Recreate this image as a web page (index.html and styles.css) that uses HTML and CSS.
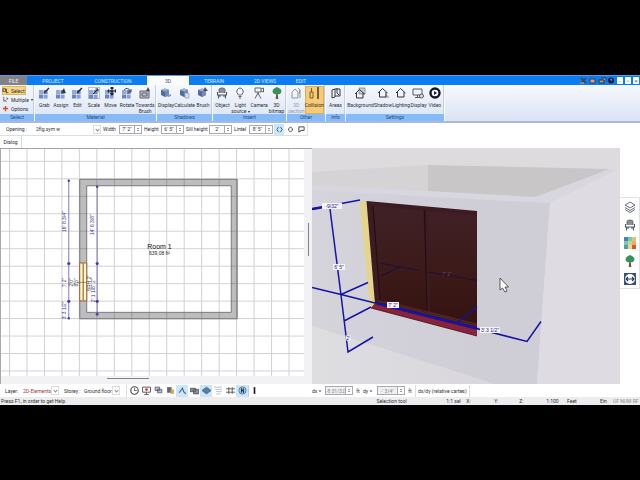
FILE: index.html
```html
<!DOCTYPE html>
<html lang="en">
<head>
<meta charset="utf-8">
<title>Room planner</title>
<link rel="stylesheet" href="styles.css">
</head>
<body>
<svg class="defs" aria-hidden="true">
  <symbol id="tiles" viewBox="0 0 12 12"><path fill="#93a9d8" d="M1 3h4v4H1z"/><path fill="#6686c8" d="M5.600 3h4v4h-4zM1 7.600h4v4H1z"/><path fill="#86a0d5" d="M5.600 7.600h4v4h-4z"/></symbol>
  <symbol id="house" viewBox="0 0 12 12"><path d="M1 6l4.500-4.500L10.500 6M2.500 5v5h6.500V5" fill="none" stroke="#30343c" stroke-width="1"/></symbol>
  <symbol id="chair" viewBox="0 0 12 12"><path d="M3 6V2.500Q3 1 6 1t3 1.500V6" fill="#8a8d94" stroke="#555961" stroke-width=".8"/><path d="M1.500 5v3h9V5M2.500 8v3.500M9.500 8v3.500M4 8v2M8 8v2" fill="none" stroke="#555961" stroke-width="1.100"/></symbol>
  <symbol id="tree" viewBox="0 0 12 12"><path d="M5.300 6h1.400l.6 6H4.700z" fill="#6b5a40"/><path d="M6 0l2 1 2 1.500.5 2.500L9 7 6 7.500 3 7 1.500 5 2 2.500 4 1z" fill="#36915a"/></symbol>
  <symbol id="cube" viewBox="0 0 12 12"><path d="M1 3l4-1.500L9 3v5L5 10 1 8z" fill="#526a9c"/><path d="M1 3l4-1.500L9 3 5 4.500z" fill="#9eb2dc"/><path d="M5 4.500L9 3v5l-4 2z" fill="#7389ba"/></symbol>
  <symbol id="monitor" viewBox="0 0 12 12"><path d="M1 2h9v6H1zM5.500 8v2M3 10.500h5" fill="#eef1f8" stroke="#454952" stroke-width=".9"/></symbol>
</svg>
<div class="app">
  <header>
    <nav class="tabs">
      <a href="#file" class="file">FILE</a><a href="#project">PROJECT</a><a href="#construction">CONSTRUCTION</a><a href="#3d" class="active">3D</a><a href="#terrain">TERRAIN</a><a href="#views">2D VIEWS</a><a href="#edit">EDIT</a>
      <div class="wintools">
        <svg viewBox="0 0 36 8" class="toolicons"><path d="M2 6l5-5M2 1l5 5" stroke="#4a4038" stroke-width="1.500"/><path d="M1 6h4" stroke="#f1a43b"/><path d="M11 2h5v4h-5z" fill="#e1a36b" stroke="#303c54"/><path d="M20 3h5v3h-5zM22 1h5v3" fill="#b09e77" stroke="#26364f"/><circle cx="32" cy="3.500" r="3" fill="#17213a"/><path d="M31 2.500q1-1 2 0l-1 1.500" fill="none" stroke="#a9bfe9" stroke-width=".7"/></svg>
        <button aria-label="Minimize">-</button><button aria-label="Restore">▫</button><button aria-label="Close">×</button>
      </div>
    </nav>
    <div class="ribbon">
      <section class="group g-select">
        <div class="stack">
          <button class="on"><svg viewBox="0 0 8 8"><path d="M1 2h3v3H1zM5 2v5l1.500-1 1 1" fill="none" stroke="#51451f"/></svg>Select</button>
          <button><svg viewBox="0 0 8 8"><path d="M2 1v5l2-1 1 2M5 2l2 1-2 1" fill="none" stroke="#333a48" stroke-width=".8"/></svg>Multiple <i class="caret"></i></button>
          <button><svg viewBox="0 0 8 8"><path d="M4 1v6M1 4h6" stroke="#dc4a20" stroke-width="1.600"/></svg>Options</button>
        </div>
        <h2>Select</h2>
      </section>
      <section class="group g-material">
        <div class="row">
          <button><svg viewBox="0 0 12 12"><use href="#tiles"/><path d="M6 6l5-5" stroke="#333" stroke-width="1.500"/></svg>Grab</button>
          <button><svg viewBox="0 0 12 12"><use href="#tiles"/><path d="M7 4l2-3 1 3 1 2H6z" fill="#333b48"/></svg>Assign</button>
          <button><svg viewBox="0 0 12 12"><use href="#tiles"/><path d="M6 6l5-5" stroke="#20262e" stroke-width="1.500"/></svg>Edit</button>
          <button><svg viewBox="0 0 12 12"><use href="#tiles"/><path d="M.5.500h11v11H.5z" fill="none" stroke="#456155" stroke-width=".7" stroke-dasharray="1 1"/><path d="M5 7l5-5M7.500 2H10v2.500" fill="none" stroke="#222"/></svg>Scale</button>
          <button><svg viewBox="0 0 12 12"><use href="#tiles"/><path d="M8 0v8M4 4h8M6.500 1.500L8 0l1.500 1.500M6.500 6.500L8 8l1.500-1.500M5 2.500L4 4l1 1.500M11 2.500L12 4l-1 1.500" fill="none" stroke="#222" stroke-width="1.200"/></svg>Move</button>
          <button><svg viewBox="0 0 12 12"><use href="#tiles"/><path d="M3 3q4-4 7 2M10 2v3H7" fill="none" stroke="#444b58"/></svg>Rotate</button>
          <button class="wide"><svg viewBox="0 0 12 12"><path d="M1 4h9v7H1zM3 6h5v3H3z" fill="#c3c6cf" stroke="#5d616a"/><path d="M7 4l2-4 2 4" fill="#444a55"/></svg>Towards<br>Brush</button>
        </div>
        <h2>Material</h2>
      </section>
      <section class="group g-shadows">
        <div class="row">
          <button><svg viewBox="0 0 12 12"><use href="#cube"/><path d="M7 9l4-2v2L8 10z" fill="#8391b1"/></svg>Display</button>
          <button><svg viewBox="0 0 12 12"><use href="#cube"/><path d="M6 6h4v5H6z" fill="#d7deed" stroke="#858fa8" stroke-width=".6"/></svg>Calculate</button>
          <button><svg viewBox="0 0 12 12"><use href="#cube"/><path d="M6 4l2-4 3 4z" fill="#4b5262"/></svg>Brush</button>
        </div>
        <h2>Shadows</h2>
      </section>
      <section class="group g-insert">
        <div class="row">
          <button><svg viewBox="0 0 12 12"><use href="#chair"/></svg>Object</button>
          <button><svg viewBox="0 0 12 12"><path d="M4.500 8Q2 5.500 3 3q3-4 6 0 1 2.500-1.500 5zM4.500 9.500h3M5 11h2" fill="none" stroke="#52565e" stroke-width=".9"/></svg>Light<br>source <i class="caret"></i></button>
          <button><svg viewBox="0 0 12 12"><path d="M2 1h6v4H2zM8 2l2.500-1v4L8 4M5 5v3M5 6l-3 5.500M5 6l3 5.500" fill="none" stroke="#63666d"/></svg>Camera</button>
          <button><svg viewBox="0 0 12 12"><use href="#tree"/></svg>3D<br>bitmap</button>
        </div>
        <h2>Insert</h2>
      </section>
      <section class="group g-other">
        <div class="row">
          <button disabled><svg viewBox="0 0 12 12"><path d="M2 11V5l3-3 3 3v6zM8 1l2 2-1 4M10 3v8" fill="none" stroke="#888d98" stroke-width=".9"/></svg>3D<br>section</button>
          <button class="on"><svg viewBox="0 0 12 12"><path d="M2 5h3v6H2zM3.500 1v4" fill="#f3c66e" stroke="#725226" stroke-width=".9"/><path d="M10 0v12" stroke="#30251a" stroke-width="1.300"/></svg>Collision</button>
        </div>
        <h2>Other</h2>
      </section>
      <section class="group g-info">
        <div class="row"><button><svg viewBox="0 0 12 12"><path d="M2 3l3-1v8l-3 1zM5 2h5v7H5M7 1v5l2 2" fill="none" stroke="#333944"/></svg>Areas</button></div>
        <h2>Info</h2>
      </section>
      <section class="group g-settings">
        <div class="row">
          <button><svg viewBox="0 0 12 12"><path d="M5 1h6v6H5z" fill="#c9ccce" stroke="#777b80" stroke-width=".7"/><use href="#house" y="1"/></svg>Background</button>
          <button><svg viewBox="0 0 12 12"><path d="M8 7l4 2v2H8z" fill="#b9bfcb"/><use href="#house"/></svg>Shadow</button>
          <button><svg viewBox="0 0 12 12"><use href="#house"/></svg>Lighting</button>
          <button><svg viewBox="0 0 12 12"><use href="#monitor"/><circle cx="9.500" cy="9" r="2" fill="#d9deea" stroke="#555a65"/></svg>Display</button>
          <button><svg viewBox="0 0 12 12"><circle cx="6" cy="6" r="5.700" fill="#10172b"/><circle cx="6" cy="6" r="3.300" fill="#f5f7ff"/><path d="M5 4l3 2-3 2z" fill="#10172b"/></svg>Video</button>
        </div>
        <h2>Settings</h2>
      </section>
    </div>
  </header>

  <form class="options">
    <label for="opening">Opening :</label>
    <span class="pick"><select id="opening"><option>2flg.sym w</option></select></span>
    <label for="w">Width</label><span class="spin"><input id="w" value="7' 2&quot;"><button type="button" aria-label="Step width"></button></span>
    <label for="h">Height</label><span class="spin"><input id="h" value="6' 5&quot;"><button type="button" aria-label="Step height"></button></span>
    <label for="s">Sill height</label><span class="spin"><input id="s" value="2'"><button type="button" aria-label="Step sill height"></button></span>
    <label for="l">Lintel</label><span class="spin"><input id="l" value="8' 5&quot;"><button type="button" aria-label="Step lintel"></button></span>
    <button type="button" class="tool on" aria-label="Flip"><svg viewBox="0 0 8 8"><path d="M3 1L1 4l2 3M5 1l2 3-2 3" fill="none" stroke="#265d86"/></svg></button>
    <button type="button" class="tool" aria-label="Swap"><svg viewBox="0 0 8 8"><path d="M2 3l2-2 2 2M2 5l2 2 2-2M2 3v2M6 3v2" fill="none" stroke="#333"/></svg></button>
    <button type="button" class="tool" aria-label="Anchor"><svg viewBox="0 0 8 8"><path d="M1 1h6v4H3M1 1v6M1 7l3-2" fill="none" stroke="#333"/></svg></button>
  </form>
  <div class="dialogrow"><button>Dialog</button></div>

  <main>
    <section class="plan">
      <svg viewBox="0 148 304 228" preserveAspectRatio="xMidYMid slice" role="img" aria-label="Floor plan">
        <defs><pattern id="grid" x="8" y="160" width="17.530" height="17.530" patternUnits="userSpaceOnUse"><path d="M.5 0v17.530M0 .5h17.530" stroke="#000" stroke-opacity=".18" stroke-width="1"/></pattern></defs>
        <path d="M0 148h304v228H0z" fill="#fff"/>
        <path d="M79 178.500h158v140h-158zM86 185v127h145v-127z" fill="#bdbdbf" fill-rule="evenodd"/>
        <path d="M0 148h304v228H0z" fill="url(#grid)"/>
        <path d="M79 178.500h158v140h-158zM86 185v127h145v-127z" fill="none" stroke="#6f6f70" stroke-width=".9"/>
        <path d="M79 262.500h7v38h-7z" fill="#fff8d5" stroke="#a85b36"/>
        <path d="M82.500 262.500v38" stroke="#a18e35" stroke-width="1.500"/>
        <path d="M76 282h10" stroke="#555" stroke-width=".6"/>
        <g stroke="#6459b0" stroke-width=".8"><path d="M68 179v140M96.500 185v129"/></g>
        <g fill="#483cab"><circle cx="68" cy="180" r="1.200"/><circle cx="68" cy="263" r="1.600"/><circle cx="68" cy="301" r="1.600"/><circle cx="68" cy="318" r="1.200"/><circle cx="96.500" cy="186" r="1.200"/><circle cx="96.500" cy="263" r="1.600"/><circle cx="96.500" cy="301" r="1.600"/><circle cx="96.500" cy="314" r="1.400"/></g>
        <g class="dim">
          <text transform="translate(65 221) rotate(-90)">16' 8 3/4"</text><text transform="translate(93 224) rotate(-90)">14' 6 3/8"</text>
          <text transform="translate(65 282) rotate(-90)">7' 2"</text><text transform="translate(65 310) rotate(-90)">3' 3 1/2"</text>
          <text transform="translate(94 290) rotate(-90)">2' 1 1/8" 2"</text>
        </g>
        <g class="dim dark"><text transform="translate(72 282) rotate(-90)">2'0"</text><text transform="translate(77 282) rotate(-90)">8'5"</text><text transform="translate(90 283) rotate(-90)">BRH 2'</text></g>
        <text class="room" x="159" y="248">Room 1</text><text class="area" x="159" y="254">639,08 ft²</text>
      </svg>
      <div class="vbar"><i></i></div>
      <div class="hbar"><i></i></div>
    </section>
    <section class="scene">
      <svg viewBox="312 148 308 236" preserveAspectRatio="xMidYMid slice" role="img" aria-label="3D view">
        <defs>
          <linearGradient id="front" x1="0" x2="1"><stop offset="0" stop-color="#d5d4db"/><stop offset=".7" stop-color="#cfced7"/><stop offset="1" stop-color="#cfced7"/></linearGradient>
          <linearGradient id="ground" x1="0" x2="1"><stop offset="0" stop-color="#dedde0"/><stop offset="1" stop-color="#d9d7dd"/></linearGradient>
          <linearGradient id="glass" x1="0" y1="0" x2="0" y2="1"><stop offset="0" stop-color="#402126"/><stop offset=".5" stop-color="#3c1b1a"/><stop offset="1" stop-color="#35130f"/></linearGradient>
        </defs>
        <path d="M312 148h308v236H312z" fill="#dddbde"/>
        <path d="M312 172l116-7v27l-116-6z" fill="#d5d3d4"/>
        <path d="M428 165l182 4-74 29-108-6z" fill="#c8c6c7"/>
        <path d="M312 185l116 6 107 6 75-28 8 1-68 33-238-12z" fill="#d8d6df"/>
        <path d="M312 190l178 10 60 3-13 181H312z" fill="url(#front)"/>
        <path d="M550 203l68-34h2v215h-83z" fill="#dedbe2"/>
        <path d="M312 326l171 54 10 4H312z" fill="url(#ground)"/>
        <path d="M359.500 201l7 .5 9 103-5.500 4z" fill="#e5d58c"/>
        <path d="M366.500 201l110.500 10v118l-102-25z" fill="#3c1c22"/>
        <path d="M373 206l50 5 3 101-46-11zM428 211l49 4v109l-47-12z" fill="url(#glass)"/>
        <path d="M373 206l7 94M424.500 210l2.500 102" fill="none" stroke="#260c12" stroke-width="1.200"/>
        <path d="M378 301l99 25M384 301l93 23" stroke="#6f3035" stroke-width=".6"/>
        <path d="M375 303l102 25v8l-106-28z" fill="#8b2338"/>
        <path d="M371 308l106 28" stroke="#32121b" stroke-width=".8"/>
        <path d="M380 263l39 7.500M381 276l19-9M428 272l49 8.500" fill="none" stroke="#1b1044" stroke-width="1.200"/>
        <text class="tag ghost" x="447" y="276">7' 2"</text>
        <g fill="none" stroke="#1414a5" stroke-width="1.500"><path d="M312 209l48-9M330 209l11 86 7 57 25-15M312 287.500l29 7 36 9 80 20 70 18 14-20M341 294.500l27-12M344 321l27-14M457 323l20-16"/><path d="M312 209l18-3M377 303.500l100 25" stroke-width="2.400"/></g>
        <g fill="#f4f3fb"><path d="M322 203h20v6h-20zM333 264h12v6h-12zM387 302h12v6h-12zM480 327h20v6h-20zM345.500 335.500h5v5h-5z"/></g>
        <text class="tag" x="332" y="208">-9/32"</text><text class="tag" x="339" y="269">6' 5"</text><text class="tag" x="393" y="307">7' 2"</text><text class="tag" x="490" y="332">3'.3 1/2"</text><text class="tag" x="348" y="340">2'</text>
        <path d="M500 278v12l2.500-2 2.500 4 2-1-2-4h3.500z" fill="#fff" stroke="#333" stroke-width=".8"/>
      </svg>
    </section>
    <aside>
      <div class="palette">
        <button aria-label="Layers"><svg viewBox="0 0 12 12"><path d="M1 4l5-3 5 3-5 3zM1 6.500l5 3 5-3M1 8.500l5 3 5-3" fill="none" stroke="#555c69" stroke-width=".9"/></svg></button>
        <button aria-label="Objects"><svg viewBox="0 0 12 12"><use href="#chair"/></svg></button>
        <button aria-label="Materials"><svg viewBox="0 0 12 12"><path fill="#3d87b8" d="M0 0h4v4H0z"/><path fill="#86c4b2" d="M4 0h4v4H4zM0 4h4v4H0z"/><path fill="#e5c36b" d="M8 0h4v4H8z"/><path fill="#c9d785" d="M4 4h4v4H4z"/><path fill="#f0ad61" d="M8 4h4v4H8z"/><path fill="#4aa0aa" d="M0 8h4v4H0z"/><path fill="#efd58d" d="M4 8h4v4H4z"/><path fill="#d4572f" d="M8 8h4v4H8z"/></svg></button>
        <button aria-label="Plants"><svg viewBox="0 0 12 12"><use href="#tree"/></svg></button>
        <button aria-label="Remote support"><svg viewBox="0 0 12 12"><path fill="#34517c" d="M0 0h12v12H0z"/><circle cx="6" cy="6" r="5" fill="#fff"/><path d="M2 6h8M4 4L2 6l2 2M8 4l2 2-2 2" fill="none" stroke="#27364f" stroke-width="1.100"/></svg></button>
      </div>
    </aside>
  </main>

  <form class="bottom">
    <div class="layers">
      <label for="layer">Layer:</label><span class="pick"><select id="layer" class="red"><option>2D-Elements</option></select></span>
      <label for="storey">Storey :</label><span class="pick"><select id="storey"><option>Ground floor</option></select></span>
      <div class="toggles">
        <button type="button" aria-label="Time"><svg viewBox="0 0 8 8"><circle cx="4" cy="4" r="3.300" fill="#fff" stroke="#444"/><path d="M4 2v2h2" fill="none" stroke="#444" stroke-width=".7"/></svg></button>
        <button type="button" aria-label="Screen"><svg viewBox="0 0 8 8"><path d="M.5 1h7v4.500h-7zM4 5.500V7M2 7.500h4" fill="none" stroke="#554b4e" stroke-width=".8"/><circle cx="4" cy="3.200" r="1.200" fill="#c33"/></svg></button>
        <button type="button" aria-label="Groups"><svg viewBox="0 0 8 8"><path d="M1 1h4v3H1zM3 3h4v3H3z" fill="#b9bdcb" stroke="#555b6b" stroke-width=".7"/></svg></button>
        <button type="button" aria-label="Colours"><svg viewBox="0 0 8 8"><path d="M1 1h4v5H1z" fill="#5b6584"/><path d="M4 3h3v4H4z" fill="#d3a548"/></svg></button>
        <button type="button" class="on" aria-label="Snap"><svg viewBox="0 0 8 8"><path d="M1 6l3-4 1 3 2 2" fill="none" stroke="#46648c"/></svg></button>
        <button type="button" aria-label="Walls"><svg viewBox="0 0 8 8"><path d="M0 2h5v3H0zM3 3h5v4H3z" fill="#8b8f9c" stroke="#434854" stroke-width=".6"/></svg></button>
        <button type="button" class="on" aria-label="Plane"><svg viewBox="0 0 8 8"><path d="M0 4l4-3 4 3-4 3z" fill="#5d7da4" stroke="#36557d" stroke-width=".6"/></svg></button>
        <button type="button" aria-label="Guides"><svg viewBox="0 0 8 8"><path d="M0 1h7M1 3h6M2 5h5M2 7h4" stroke="#b6babc" stroke-width=".8"/></svg></button>
        <button type="button" aria-label="Grid"><svg viewBox="0 0 8 8"><path d="M2.500 1v6M5.500 1v6M0 2.500h8M0 5.500h8" stroke="#555" stroke-width=".8"/></svg></button>
        <button type="button" class="on" aria-label="North"><svg viewBox="0 0 8 8"><circle cx="4" cy="4" r="3.200" fill="#b5d5f0" stroke="#466486" stroke-width=".7"/><path d="M3 6V2l2 4V2" fill="none" stroke="#1c4066" stroke-width=".9"/></svg></button>
        <button type="button" class="last" aria-label="Info"><svg viewBox="0 0 8 8"><path d="M4 1v6" stroke="#222" stroke-width="1.500"/></svg></button>
      </div>
    </div>
    <div class="coords">
      <label for="dx">dx =</label><span class="spin"><input id="dx" value="-8 31/32&quot;" disabled><button type="button" aria-label="Step dx"></button></span><span>ft</span>
      <label for="dy">dy =</label><span class="spin"><input id="dy" value="-' 3/4&quot;" disabled><button type="button" aria-label="Step dy"></button></span><span>ft</span>
      <span class="pick plain"><select aria-label="Coordinate mode"><option>dx/dy (relative cartes)</option></select></span>
    </div>
  </form>
  <footer><span>Press F1, in order to get Help.</span><span>Selection tool</span><span>1:1 sel</span><span>X:</span><span>Y:</span><span>Z:</span><span>1:100</span><span>Feet</span><span>Ein</span><span class="dim-text">UF NUM RF</span></footer>
</div>
</body>
</html>
```
FILE: styles.css
```css
* { box-sizing: border-box; }
body {
  margin: 0;
  padding: 75px 0;
  height: 100vh;
  background: #000;
  color: #2c2e33;
  font: 5px/6px Roboto, "Noto Sans", sans-serif;
}
.defs { position: absolute; width: 0; height: 0; }
.app { display: flex; flex-direction: column; height: 100%; background: #fff; overflow: hidden; }
button, input, select { font: inherit; color: inherit; border: 0; background: none; padding: 0; margin: 0; border-radius: 0; }
svg { display: block; }

/* tabs */
.tabs {
  display: grid;
  grid-template-columns: 27px 52px 68px 42px 50px 52px 20px 1fr;
  height: 10px;
  border-top: 1px solid #4ba0ee;
  background: #0b7cf2;
}
.tabs a { display: flex; align-items: center; justify-content: center; color: #d6eaff; text-decoration: none; }
.tabs .file { background: #808286; color: #eee; }
.tabs .active { background: #fafbff; color: #4e5665; }
.wintools { display: flex; justify-content: flex-end; gap: 2px; padding-right: 1px; align-items: center; }
.toolicons { width: 36px; height: 8px; }
.wintools button { width: 6px; height: 7px; background: #f4faff; color: #357; line-height: 6px; text-align: center; }

/* ribbon */
.ribbon { display: flex; height: 38px; background: linear-gradient(#f6f8fe, #dae3f4); border-bottom: 2px solid #a9b9d8; }
.group { display: flex; flex-direction: column; border-right: 1px solid #f8faff; box-shadow: inset -1px 0 #c3cee3; }
.group h2 { margin: 0; height: 8px; font: inherit; line-height: 7px; text-align: center; background: #85bbfa; color: #234a7c; }
.g-select { width: 35px; }
.g-material { width: 122px; }
.g-shadows { width: 56px; }
.g-insert { width: 74px; }
.g-other { width: 39px; }
.g-info { width: 20px; }
.g-settings { width: 99px; }
.row { display: flex; flex: 1; justify-content: space-around; padding: 1px 1px 0; }
.row button { display: flex; flex-direction: column; align-items: center; min-width: 16px; padding-top: 1px; white-space: nowrap; text-align: center; line-height: 6px; height: 28px; }
.row svg { width: 12px; height: 12px; margin-bottom: 3px; flex: none; }
.row .on { background: #f7cb76; box-shadow: inset 0 0 0 1px #dfae55; }
.row button:disabled { color: #969ba8; }
.g-insert button { display: block; }
.g-insert button svg { margin: 0 auto 3px; }
.g-insert button { height: auto; align-self: flex-start; }
.stack { display: flex; flex: 1; flex-direction: column; align-items: flex-start; padding: 1px 2px; }
.stack button { display: flex; align-items: center; gap: 2px; height: 9px; padding-right: 1px; white-space: nowrap; }
.stack svg { width: 7px; height: 7px; }
.stack .on { background: #f9d58a; box-shadow: inset 0 0 0 1px #dfb65d; }
.caret { display: inline-block; border: 1px solid transparent; border-top: 2px solid #222; border-bottom: 0; vertical-align: middle; }

/* fields */
.options {
  display: grid;
  grid-template-columns: 30px 65px 16px 23px 17px 23px 23px 23px 15px 24px 10px 10px 10px;
  column-gap: 1px;
  align-items: center;
  width: 308px;
  height: 13px;
  padding-left: 5px;
  border-bottom: 1px solid #dedee2;
  border-right: 1px solid #dedee2;
  white-space: nowrap;
}
.pick { position: relative; display: flex; align-items: center; height: 8px; }
.pick select { width: 100%; appearance: none; color: #333; }
.pick::after {
  content: "";
  position: absolute;
  right: 2px;
  width: 2px;
  height: 2px;
  border: solid #888;
  border-width: 0 1px 1px 0;
  transform: rotate(45deg);
  pointer-events: none;
}
.pick::before { content: ""; position: absolute; right: 0; width: 6px; height: 7px; border: 1px solid #dcdce0; pointer-events: none; }
.plain::before { display: none; }
.options label { padding-left: 1px; }
.spin { display: flex; height: 9px; border: 1px solid #a9aab0; }
.spin input { flex: 1; min-width: 0; width: 0; text-align: center; }
.spin button { width: 7px; border-left: 1px solid #a9aab0; display: grid; place-content: center; gap: 1px; }
.spin button::before, .spin button::after { content: ""; border: 1px solid transparent; }
.spin button::before { border-bottom-color: #333; border-top: 0; }
.spin button::after { border-top-color: #333; border-bottom: 0; }
.tool { height: 11px; display: grid; place-items: center; }
.tool svg { width: 7px; height: 7px; }
.tool.on, .toggles .on { background: #cce6f9; }
.dialogrow { height: 12px; display: flex; }
.dialogrow button { width: 22px; border-right: 1px solid #ddd; }

/* work area */
main { display: grid; grid-template-columns: 312fr 308fr 20fr; flex: 1; min-height: 0; }
.plan { display: grid; grid-template: minmax(0, 1fr) 8px / minmax(0, 1fr) 8px; background: #f2f1f4; border-top: 1px solid #a4a4a8; border-left: 1px solid #aaa; min-height: 0; }
.plan svg, .scene svg { width: 100%; height: 100%; }
.scene, aside { min-height: 0; min-width: 0; }
.vbar { display: flex; justify-content: center; padding-top: 74px; }
.vbar i { width: 1px; height: 33px; background: #858588; }
.hbar { display: flex; justify-content: center; align-items: flex-start; padding: 1px 50px 0 0; }
.hbar i { width: 42px; height: 1px; margin-top: 1px; background: #858588; }
.dim { font: 5px "Liberation Sans", sans-serif; fill: #3c3597; text-anchor: middle; }
.dark { fill: #3e3e45; }
.room { font: 7px "Liberation Sans", sans-serif; fill: #111; text-anchor: middle; }
.area { font: 5px "Liberation Sans", sans-serif; fill: #222; text-anchor: middle; }
.tag { font: 5px "Liberation Sans", sans-serif; fill: #282878; text-anchor: middle; }
.ghost { fill: #6a4557; }
.palette { margin-top: 49px; height: 92px; display: flex; flex-direction: column; justify-content: space-around; align-items: center; border: 1px solid #e2e2e6; border-left: 0; }
.palette svg { width: 12px; height: 12px; }

/* lower bars */
.bottom { display: grid; grid-template-columns: 308fr 332fr; height: 13px; background: #f0eff2; white-space: nowrap; }
.layers { display: grid; grid-template-columns: 16px 36px 21px 36px 1fr; column-gap: 2px; align-items: center; padding-left: 5px; background: #fff; }
.layers > label:nth-of-type(2) { padding-left: 3px; }
.red { color: #a13a4a !important; }
.toggles { display: flex; margin-left: 4px; padding-left: 1px; border-left: 1px solid #ddd; }
.toggles button { width: 12px; height: 12px; display: grid; place-items: center; }
.toggles svg { width: 9px; height: 9px; }
.toggles .last { border-left: 1px solid #ccc; }
.coords { display: grid; grid-template-columns: 12px 28px 8px 13px 28px 8px 55px; column-gap: 1px; align-items: center; padding-left: 4px; background: #fff; }
.coords input { color: #888; background: #f0f0f2; }
.coords > span:not(.spin):not(.pick) { text-align: center; }
.coords .pick { border-left: 1px solid #ddd; border-right: 1px solid #ddd; height: 12px; padding-left: 2px; }
.coords .plain::after { right: 6px; }
footer {
  display: grid;
  grid-template-columns: 376fr 70fr 20fr 28fr 25fr 27fr 21fr 33fr 13fr 27fr;
  align-items: center;
  height: 8px;
  padding-left: 1px;
  background: #ededf0;
  white-space: nowrap;
}
.dim-text { color: #888; }
```
